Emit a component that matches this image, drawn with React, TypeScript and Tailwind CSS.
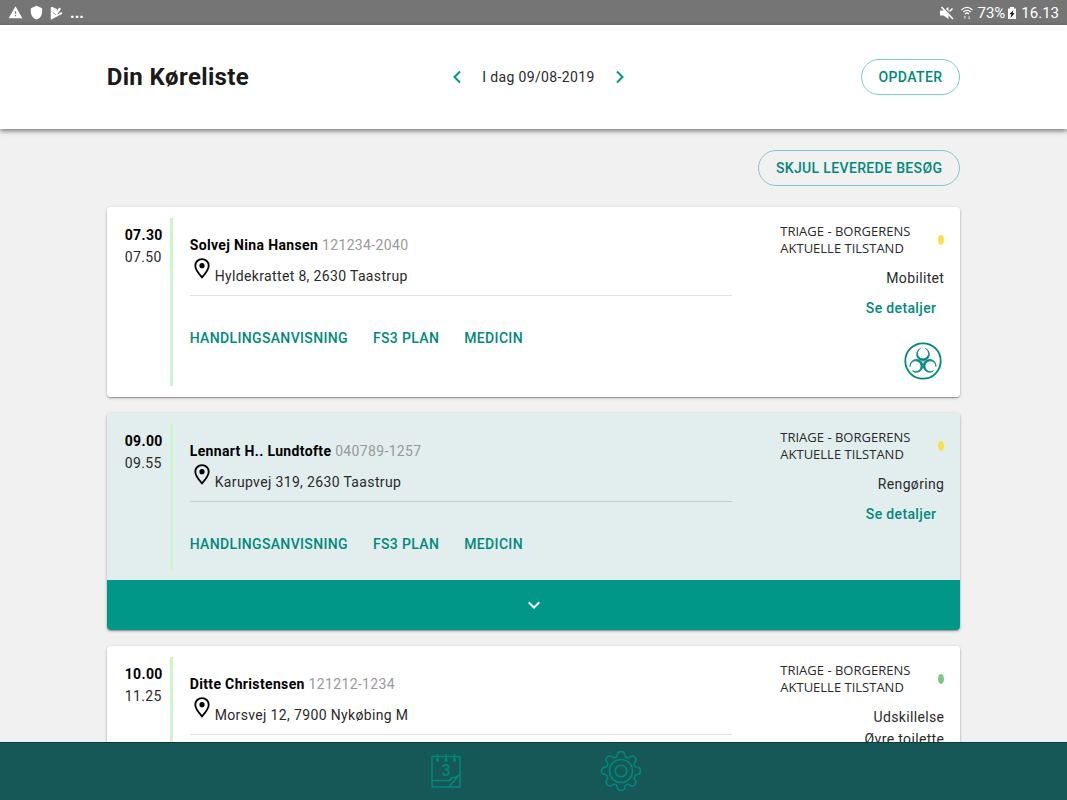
import { useState } from 'react';
import { MdKeyboardArrowDown, MdShield, MdWarning } from 'react-icons/md';

type Visit = {
  id: number;
  start: string;
  end: string;
  name: string;
  cpr: string;
  address: string;
  triage: 'yellow' | 'green';
  tasks: string[];
  infectious?: boolean;
  active?: boolean;
};

const visits: Visit[] = [
  {
    id: 1,
    start: '07.30',
    end: '07.50',
    name: 'Solvej Nina Hansen',
    cpr: '121234-2040',
    address: 'Hyldekrattet 8, 2630 Taastrup',
    triage: 'yellow',
    tasks: ['Mobilitet'],
    infectious: true,
  },
  {
    id: 2,
    start: '09.00',
    end: '09.55',
    name: 'Lennart H.. Lundtofte',
    cpr: '040789-1257',
    address: 'Karupvej 319, 2630 Taastrup',
    triage: 'yellow',
    tasks: ['Rengøring'],
    active: true,
  },
  {
    id: 3,
    start: '10.00',
    end: '11.25',
    name: 'Ditte Christensen',
    cpr: '121212-1234',
    address: 'Morsvej 12, 7900 Nykøbing M',
    triage: 'green',
    tasks: ['Udskillelse', 'Øvre toilette'],
  },
];

const actions = ['HANDLINGSANVISNING', 'FS3 PLAN', 'MEDICIN'];

function StatusBar() {
  return (
    <div className="flex h-[25px] shrink-0 items-center justify-between bg-[#757575] px-2 text-white">
      <div className="flex items-center gap-[6px]">
        <MdWarning size={15} />
        <MdShield size={15} />
        <svg width="14" height="14" viewBox="0 0 14 14" fill="none">
          <path d="M1 1v12l11-6-1-1-4 4-4-3 1-1 3 2 4-5-2-1-2 3z" fill="currentColor" />
          <path d="M1.500 1.500v11L12 7M1.500 1.500L7 4M4 6l2.500 2L10 2" stroke="currentColor" strokeWidth="1.500" />
        </svg>
        <span className="text-base leading-6 font-bold">...</span>
      </div>
      <div className="flex items-center gap-[2px] text-[15px] leading-6">
        <svg width="14" height="14" viewBox="0 0 14 14" className="mr-[5px]">
          <path d="M0 4.500h3.500L8.500 1v12L3.500 9.500H0z" fill="currentColor" />
          <path d="M3 1l10 10" stroke="#757575" strokeWidth="1.500" />
          <path d="M1.500 1l11.500 12M9.500 5.500l3-3" stroke="currentColor" strokeWidth="1.600" />
        </svg>
        <svg width="12" height="14" viewBox="0 0 12 14" fill="none" stroke="currentColor" strokeWidth="1.200" className="mr-[2px]">
          <path d="M.5 4C4 .8 8 .8 11.500 4M2.300 6C4.500 4 7.500 4 9.700 6M4 8c1.300-1.300 2.700-1.300 4 0" />
          <path d="M4 13v-3M3 11l1-1M8 10v3M8 13l1-1" opacity=".6" />
        </svg>
        <span>73%</span>
        <svg width="10" height="14" viewBox="0 0 10 14" className="mr-[2px]">
          <path d="M3 1h4v1.500h2V13H1V2.500h2z" fill="currentColor" />
          <path d="M6.500 4L2.500 8.300h2L3.500 12l4-4.700h-2z" fill="black" />
        </svg>
        <span>16.13</span>
      </div>
    </div>
  );
}

function Chevron({ flip = false }: { flip?: boolean }) {
  return (
    <svg width="8" height="14" viewBox="0 0 8 14" fill="none" stroke="#009688" strokeWidth="2">
      <path d={flip ? 'M1 1.500L6.500 7 1 12.500' : 'M7 1.500L1.500 7 7 12.500'} />
    </svg>
  );
}

function PinIcon() {
  return (
    <svg width="16" height="21" viewBox="0 0 16 21" fill="none">
      <path d="M8 1.100c-3.800 0-6.700 2.900-6.700 6.600C1.300 12 8 19.300 8 19.300S14.700 12 14.700 7.700C14.700 4 11.800 1.100 8 1.100z" stroke="black" strokeWidth="1.800" />
      <circle cx="8" cy="7.700" r="2.600" fill="black" />
    </svg>
  );
}

function BiohazardIcon() {
  return (
    <svg width="38" height="38" viewBox="-19 -19 38 38" fill="none" stroke="#00897b" role="img" aria-label="Smitterisiko">
      <circle r="17.700" strokeWidth="1.800" />
      {[0, 120, 240].map(angle => (
        <g key={angle} transform={`translate(0 1) rotate(${angle})`}>
          <path d="M-2.500-13.500A6.400 6.400 0 1 0 2.500-13.500A5.500 5.500 0 1 1-2.500-13.500z" fill="#00897b" strokeWidth="0.700" />
        </g>
      ))}
      <circle cy="1" r="1.200" fill="white" strokeWidth="0.500" />
    </svg>
  );
}

function CalendarIcon() {
  return (
    <svg width="30" height="36" viewBox="0 0 30 36" fill="none" stroke="#00897b" strokeWidth="1.500">
      <path d="M19 34H1V3.500h28V21M1 27.500h18M29 21L18 34h11V21c-3 3-5 4-9 4l-1 3" strokeLinejoin="round" />
      <path d="M6.500 1v6M15 1v6M23.500 1v6" />
      <g fill="#00897b" stroke="none">
        <circle cx="6.500" cy="7" r="1.700" />
        <circle cx="15" cy="7" r="1.700" />
        <circle cx="23.500" cy="7" r="1.700" />
      </g>
      <text x="15" y="23" textAnchor="middle" fill="#00897b" stroke="none" className="text-base font-medium">
        3
      </text>
    </svg>
  );
}

function GearIcon() {
  return (
    <svg width="44" height="44" viewBox="-21 -21 42 42" fill="none" stroke="#00897b" strokeWidth="1.500">
      {[0, 45, 90, 135, 180, 225, 270, 315].map(angle => (
        <path
          key={angle}
          transform={`rotate(${angle})`}
          d="M-3.600-15.600A3.700 3.900 0 0 1 3.600-15.600A2.800 2.800 0 0 0 8.490-13.580"
        />
      ))}
      <circle r="11" />
      <circle r="5.500" />
    </svg>
  );
}

function VisitCard({ visit }: { visit: Visit }) {
  return (
    <li className="overflow-hidden rounded bg-white shadow-[0_1px_3px_rgba(0,0,0,0.3),0_1px_1px_rgba(0,0,0,0.2)]">
      <div className={`flex py-[11px] pr-4 pl-[18px] ${visit.active ? 'bg-[#e1eeed]' : 'bg-white'}`}>
        <div className="w-[45px] shrink-0 pt-[6px] leading-[22px]">
          <div className="font-bold text-black">{visit.start}</div>
          <div>{visit.end}</div>
        </div>
        <div className="mr-[17px] w-[3px] shrink-0 bg-[#ccf5cf]" />

        <div className="min-w-0 flex-1 pt-[17px] pb-[7px]">
          <h2 className="leading-5 text-[#999999]">
            <span className="font-bold text-black">{visit.name}</span> {visit.cpr}
          </h2>
          <div className="flex h-[41px] items-start gap-[5px] border-b border-[#0000001f] pt-[3px] pl-1">
            <PinIcon />
            <span className="pt-2 leading-5">{visit.address}</span>
          </div>
          <div className="mt-6 flex gap-[25px]">
            {actions.map(action => (
              <button key={action} type="button" className="h-9 font-medium text-[#00897b]">
                {action}
              </button>
            ))}
          </div>
        </div>

        <div className="ml-12 flex w-[164px] shrink-0 flex-col items-end pt-[5px]">
          <div className="flex w-full items-center justify-between">
            <p className="font-['Open_Sans',sans-serif] text-[13px] leading-[17px] tracking-normal">
              TRIAGE - BORGERENS
              <br />
              AKTUELLE TILSTAND
            </p>
            <span
              className={`h-[10px] w-[6px] rounded-[50%] ${visit.triage === 'yellow' ? 'bg-[#fde047]' : 'bg-[#7bc882]'}`}
            />
          </div>
          <div className="mt-[10px] text-right leading-[22px]">
            {visit.tasks.map(task => (
              <div key={task}>{task}</div>
            ))}
          </div>
          <button type="button" className="h-[38px] px-2 font-medium text-[#00897b]">
            Se detaljer
          </button>
          {visit.infectious && (
            <div className="pt-[15px] pr-[2px] pb-[6px]">
              <BiohazardIcon />
            </div>
          )}
        </div>
      </div>
      {visit.active && (
        <button type="button" aria-label="Vis mere" className="flex h-[50px] w-full items-center justify-center bg-[#009688] text-white">
          <MdKeyboardArrowDown size={24} />
        </button>
      )}
    </li>
  );
}

export default function App() {
  const [hideDelivered, setHideDelivered] = useState(false);

  return (
    <div className="flex h-screen flex-col bg-[#f1f1f1] font-[Roboto,sans-serif] text-sm text-[#2a2a2a]">
      <StatusBar />

      <header className="z-10 shrink-0 bg-white shadow-[0_2px_5px_rgba(0,0,0,0.5)]">
        <div className="mx-auto grid h-[104px] w-4/5 grid-cols-[1fr_auto_1fr] items-center tracking-wide">
          <h1 className="text-2xl font-bold text-[#1a1a1a]">Din Køreliste</h1>
          <div className="flex items-center gap-[21px] pl-[10px]">
            <button type="button" aria-label="Forrige dag">
              <Chevron />
            </button>
            <span>I dag 09/08-2019</span>
            <button type="button" aria-label="Næste dag">
              <Chevron flip />
            </button>
          </div>
          <button
            type="button"
            className="h-9 justify-self-end rounded-full border border-[#80cbc4] px-[17px] font-medium text-[#00897b]"
          >
            OPDATER
          </button>
        </div>
      </header>

      <main className="min-h-0 flex-1 overflow-hidden">
        <div className="mx-auto w-4/5 pt-[21px] tracking-wide">
          <div className="flex justify-end">
            <button
              type="button"
              aria-pressed={hideDelivered}
              onClick={() => setHideDelivered(!hideDelivered)}
              className="h-9 rounded-full border border-[#80cbc4] px-[17px] font-medium text-[#00897b]"
            >
              SKJUL LEVEREDE BESØG
            </button>
          </div>
          <ul className="mt-[21px] flex flex-col gap-4">
            {visits.map(visit => (
              <VisitCard key={visit.id} visit={visit} />
            ))}
          </ul>
        </div>
      </main>

      <nav className="z-10 flex h-[58px] shrink-0 items-center justify-center gap-[138px] border-t border-[#0d3b3c] bg-[#165758] pb-[2px] pl-[7px]">
        <a href="#koreliste" aria-label="Køreliste">
          <CalendarIcon />
        </a>
        <a href="#indstillinger" aria-label="Indstillinger">
          <GearIcon />
        </a>
      </nav>
    </div>
  );
}
